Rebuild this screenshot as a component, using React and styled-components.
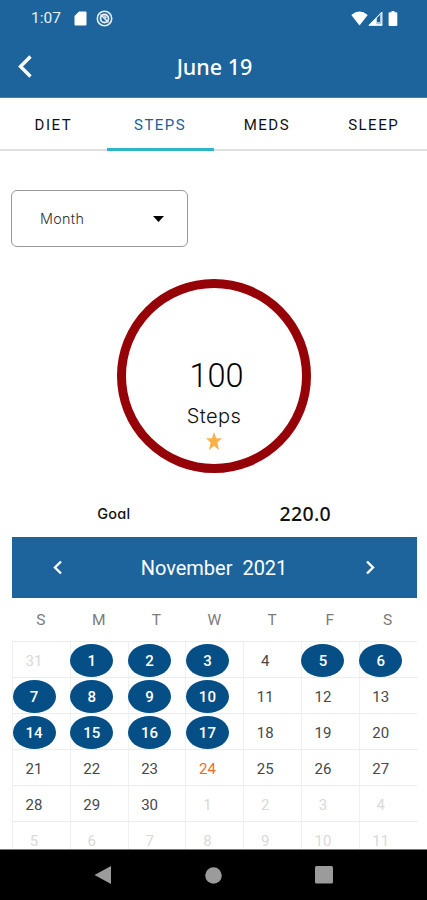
import React, { useState } from "react";
import styled, { createGlobalStyle } from "styled-components";

const GlobalStyle = createGlobalStyle`
  * {
    box-sizing: border-box;
  }
  body {
    margin: 0;
    background: #fff;
    font-family: Roboto, "Liberation Sans", sans-serif;
  }
  button {
    margin: 0;
    padding: 0;
    border: 0;
    background: none;
    color: inherit;
    font: inherit;
  }
  svg {
    display: block;
  }
`;

const Screen = styled.div`
  display: flex;
  flex-direction: column;
  width: 427px;
  height: 900px;
  overflow: hidden;
  background: #fff;
`;

const Header = styled.header`
  height: 98px;
  flex: none;
  background: #1d649d;
  border-bottom: 1px solid #4d80ae;
  color: #fff;
`;

const StatusBar = styled.div`
  display: flex;
  align-items: center;
  height: 36px;
  padding: 0 28px 0 31px;
`;

const Clock = styled.span`
  width: 43px;
  font-size: 15.5px;
  line-height: 36px;
  color: #e8f0f7;
`;

const StatusIcons = styled.div`
  display: flex;
  align-items: center;
  gap: ${props => props.gap}px;
  margin-left: ${props => props.end ? 'auto' : 0};
`;

const TitleBar = styled.div`
  display: grid;
  grid-template-columns: 60px 1fr 60px;
  align-items: center;
  height: 60px;
`;

const BackButton = styled.button`
  padding-left: 18px;
`;

const Title = styled.h1`
  margin: 0;
  padding: 1px 0 0 2px;
  font-family: "Noto Sans", "Open Sans", sans-serif;
  font-size: 21.5px;
  font-weight: 500;
  line-height: 30px;
  text-align: center;
`;

const Tabs = styled.nav`
  display: grid;
  grid-template-columns: repeat(4, 1fr);
  height: 53px;
  flex: none;
`;

const Tab = styled.button`
  padding-top: ${props => props.active ? 4 : 3}px;
  border-bottom: ${props => props.active ? '3px solid #2cb5c4' : '2px solid #e0e0e0'};
  color: ${props => props.active ? '#1d5f9b' : '#111'};
  font-size: 15px;
  font-weight: 400;
  letter-spacing: 1.5px;
`;

const Select = styled.button`
  display: flex;
  align-items: center;
  justify-content: space-between;
  flex: none;
  width: 177px;
  height: 57px;
  margin: 39px 0 0 11px;
  padding: 0 23px 0 28px;
  border: 1px solid #999;
  border-radius: 6px;
  color: #333;
  font-family: Inter, sans-serif;
  font-size: 14.4px;
  font-weight: 300;
  letter-spacing: 0.3px;
`;

const Ring = styled.div`
  display: flex;
  flex-direction: column;
  align-items: center;
  flex: none;
  width: 194px;
  height: 194px;
  margin: 32px 0 0 117px;
  padding-top: 69px;
  border: 9px solid #950207;
  border-radius: 50%;
`;

const Count = styled.div`
  padding-left: 5px;
  color: #000;
  font-size: 32.5px;
  font-weight: 300;
  line-height: 38px;
`;

const Unit = styled.div`
  color: #111;
  font-family: Inter, sans-serif;
  font-size: 20px;
  font-weight: 300;
  line-height: 28px;
  margin: 7px 0 2px;
  letter-spacing: 0.4px;
`;

const GoalRow = styled.div`
  display: grid;
  grid-template-columns: 1fr 1fr;
  align-items: center;
  flex: none;
  height: 64px;
  padding: 16px 0 0;
  color: #111;
  text-align: center;
`;

const GoalLabel = styled.div`
  padding-left: 14px;
  font-family: Inter, sans-serif;
  font-feature-settings: "cv11";
  font-size: 14.5px;
  font-weight: 500;
  letter-spacing: 0.2px;
`;

const GoalValue = styled.div`
  padding-right: 30px;
  font-family: "Noto Sans", sans-serif;
  font-size: 19.5px;
  font-weight: 500;
  letter-spacing: 0.3px;
`;

const Calendar = styled.section`
  flex: 1;
  min-height: 0;
  margin: 0 10px 0 12px;
  overflow: hidden;
`;

const MonthBar = styled.div`
  display: flex;
  align-items: center;
  justify-content: space-between;
  height: 61px;
  padding: 0 42px 0 41px;
  background: #1d649d;
  color: #fff;
`;

const MonthName = styled.span`
  font-size: 20px;
  letter-spacing: 0;
  white-space: pre;
`;

const Weekdays = styled.div`
  display: grid;
  grid-template-columns: repeat(7, 57.8px);
  height: 43px;
  color: #7c7c7c;
  font-size: 15.5px;
  font-weight: 400;
  line-height: 45px;
  text-align: center;
`;

const Days = styled.div`
  display: grid;
  grid-template-columns: repeat(7, 57.8px);
  grid-auto-rows: 36px;
`;

const Cell = styled.div`
  padding-top: 2px;
  border-top: 1px solid #ececec;
  border-left: 1px solid #f0f0f0;
`;

const dayColors = {
  normal: '#484848',
  marked: '#fff',
  today: '#f4692b',
  outside: '#d9d9d9',
};

const Day = styled.button`
  display: block;
  width: 43px;
  height: 33px;
  margin-left: -0.5px;
  border-radius: 50%;
  background: ${props => props.kind === 'marked' ? '#064f86' : 'transparent'};
  color: ${props => dayColors[props.kind]};
  font-size: 15px;
  font-weight: ${props => props.kind === 'marked' ? 500 : 400};
  line-height: 34px;
  text-align: center;
`;

const NavBar = styled.footer`
  display: flex;
  align-items: center;
  justify-content: space-between;
  flex: none;
  height: 51px;
  padding: 0 94px;
  background: #000;
  border-top: 1px solid #777;
`;

const TABS = ['DIET', 'STEPS', 'MEDS', 'SLEEP'];
const WEEKDAYS = ['S', 'M', 'T', 'W', 'T', 'F', 'S'];
const MARKED = [1, 2, 3, 5, 6, 7, 8, 9, 10, 14, 15, 16, 17];
const TODAY = 24;

// Oct 31 leads the grid, Dec 1 - 11 fill the end
const days = Array.from({ length: 42 }, (_, i) => {
  if (i === 0) return { label: 31, kind: 'outside' };
  if (i > 30) return { label: i - 30, kind: 'outside' };
  if (i === TODAY) return { label: i, kind: 'today' };
  return { label: i, kind: MARKED.includes(i) ? 'marked' : 'normal' };
});

const Chevron = ({ width, height, stroke, right }) => (
  <svg width={width} height={height} viewBox="0 0 12 20" fill="none" stroke="#fff" strokeWidth={stroke}>
    <path d={right ? "M2 2l8 8-8 8" : "M10 2l-8 8 8 8"} />
  </svg>
);

const App = () => {
  const [activeTab, setActiveTab] = useState('STEPS');

  return (
    <>
      <GlobalStyle />
      <Screen>
        <Header>
          <StatusBar>
            <Clock>1:07</Clock>
            <StatusIcons gap={9}>
              <svg width="13" height="15" viewBox="0 0 13 15">
                <path d="M5 0.500h6.500a1 1 0 0 1 1 1v12a1 1 0 0 1-1 1h-10a1 1 0 0 1-1-1V5z" fill="#fff" />
              </svg>
              <svg width="17" height="17" viewBox="0 0 17 17" fill="none" stroke="#e3edf5">
                <circle cx="8.5" cy="8.5" r="7.2" strokeWidth="1.6" />
                <circle cx="8.5" cy="8.5" r="4" strokeWidth="1.8" />
                <path d="M4.500 4.500l8 8M8.500 6l2 2" strokeWidth="1.6" />
              </svg>
            </StatusIcons>
            <StatusIcons gap={0} end="true">
              <svg width="17" height="15" viewBox="0 0 17 15">
                <path d="M0.300 4Q8.500-2.800 16.700 4L8.500 14.500z" fill="#fff" />
              </svg>
              <svg width="15" height="15" viewBox="0 0 15 15">
                <path d="M14.300 0.500v14H0.500z" fill="#a9c4dc" />
                <path d="M0.500 14.500L8.300 6.500v6.800h6v1.200z" fill="#fff" />
                <path d="M9 7l3-3v7H9z" fill="#1d649d" />
                <path d="M13.800 1v13.200H1.200z" fill="none" stroke="#eef4f9" />
              </svg>
              <svg width="16" height="15" viewBox="0 0 16 15">
                <path d="M8.500 0h3v1.300h1.800q1 0 1 1V14q0 1-1 1H6.600q-1 0-1-1V2.300q0-1 1-1h1.900z" fill="#fff" />
              </svg>
            </StatusIcons>
          </StatusBar>
          <TitleBar>
            <BackButton aria-label="Back">
              <Chevron width={15} height={25} stroke={2.7} />
            </BackButton>
            <Title>June 19</Title>
          </TitleBar>
        </Header>
        <Tabs>
          {TABS.map(tab => (
            <Tab key={tab} active={tab === activeTab ? 1 : 0} onClick={() => setActiveTab(tab)}>{tab}</Tab>
          ))}
        </Tabs>
        <Select>
          Month
          <svg width="11" height="6" viewBox="0 0 11 6">
            <path d="M0 0h11L5.500 6z" fill="#000" />
          </svg>
        </Select>
        <Ring>
          <Count>100</Count>
          <Unit>Steps</Unit>
          <svg width="16" height="18" viewBox="0 0 16 18">
            <path d="M8 0l2.200 6.200H16l-4.600 4.300L13 18l-5-4.100L3 18l1.600-7.500L0 6.200h5.800z" fill="#fbb149" />
          </svg>
        </Ring>
        <GoalRow>
          <GoalLabel>Goal</GoalLabel>
          <GoalValue>220.0</GoalValue>
        </GoalRow>
        <Calendar>
          <MonthBar>
            <button aria-label="Previous month"><Chevron width={10} height={15} stroke={3.2} /></button>
            <MonthName>{"November  2021"}</MonthName>
            <button aria-label="Next month"><Chevron width={10} height={15} stroke={3.2} right /></button>
          </MonthBar>
          <Weekdays>
            {WEEKDAYS.map((name, i) => <span key={i}>{name}</span>)}
          </Weekdays>
          <Days>
            {days.map((day, i) => (
              <Cell key={i}>
                <Day kind={day.kind}>{day.label}</Day>
              </Cell>
            ))}
          </Days>
        </Calendar>
        <NavBar>
          <svg width="17" height="18" viewBox="0 0 17 18">
            <path d="M17 0v18L0.500 9z" fill="#9b9b9b" />
          </svg>
          <svg width="17" height="17" viewBox="0 0 17 17">
            <circle cx="8.5" cy="8.5" r="8.3" fill="#9b9b9b" />
          </svg>
          <svg width="18" height="18" viewBox="0 0 18 18">
            <rect width="18" height="17.500" rx="1.500" fill="#9b9b9b" />
          </svg>
        </NavBar>
      </Screen>
    </>
  );
};

export default App;
